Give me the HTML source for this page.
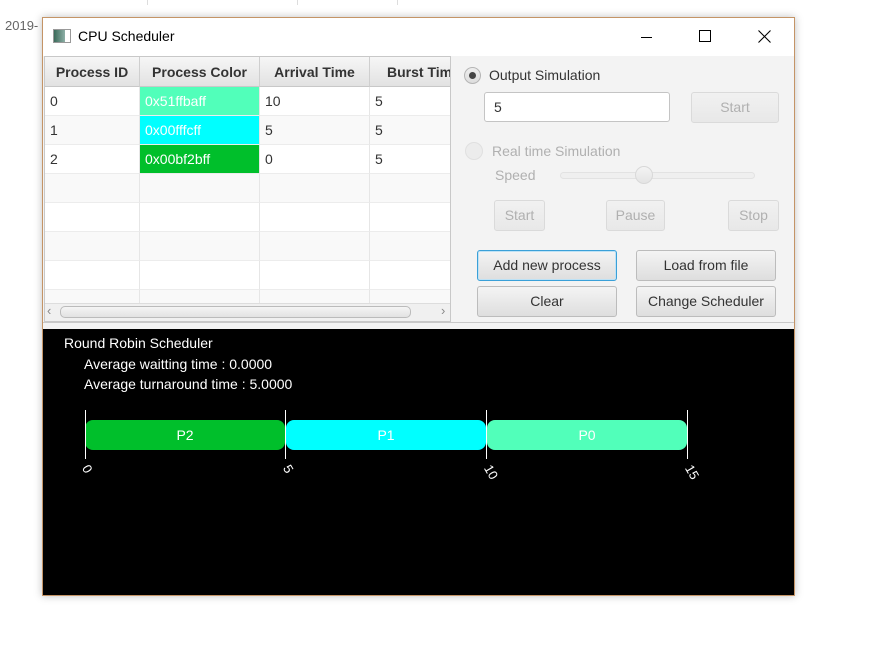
<!DOCTYPE html>
<html><head><meta charset="utf-8"><style>
*{box-sizing:border-box;margin:0;padding:0}
body{width:881px;height:656px;background:#fff;position:relative;overflow:hidden;font-family:"Liberation Sans",sans-serif;font-size:14px;color:#333}
.a{position:absolute}
.win{left:42px;top:17px;width:753px;height:579px;border:1px solid #c49466;background:#f3f3f3;box-shadow:0 0 8px rgba(0,0,0,.25)}
.th{position:absolute;top:0;height:30px;background:linear-gradient(#f6f6f6,#e2e2e2);border-right:1px solid #cfcfcf;border-bottom:1px solid #c8c8c8;font-weight:bold;text-align:center;line-height:30px;color:#333;overflow:hidden;white-space:nowrap}
.td{position:absolute;height:29px;line-height:29px;padding-left:5px;border-right:1px solid #e6e6e6;border-bottom:1px solid #ececec;white-space:nowrap;overflow:hidden}
.btn{position:absolute;height:31px;border:1px solid #bcbcbc;border-radius:3px;background:linear-gradient(#f4f4f4,#dedede);text-align:center;line-height:29px;color:#333}
.dis{color:#b0b0b0;border-color:#dadada;background:linear-gradient(#f1f1f1,#e8e8e8)}
.w{color:#fff}
.tk{position:absolute;top:133px;transform:rotate(60deg);transform-origin:left top;font-size:13px}
</style></head><body>
<div class="a" style="left:5px;top:18px;color:#666;font-size:13px">2019-</div>
<div class="a" style="left:147px;top:0;width:1px;height:5px;background:#ddd"></div>
<div class="a" style="left:297px;top:0;width:1px;height:5px;background:#ddd"></div>
<div class="a" style="left:397px;top:0;width:1px;height:5px;background:#ddd"></div>
<div class="a win">
 <div class="a" style="left:0;top:0;width:751px;height:38px;background:#fff"></div>
 <div class="a" style="left:10px;top:11px;width:18px;height:14px;border:1px solid #999;background:linear-gradient(90deg,#3b6b5a,#8fb0a8 70%,#fff 70%)"></div>
 <div class="a" style="left:35px;top:10px;font-size:14px;color:#000">CPU Scheduler</div>
 <div class="a" style="left:598px;top:19px;width:11px;height:1px;background:#000"></div>
 <div class="a" style="left:656px;top:12px;width:12px;height:12px;border:1px solid #000"></div>
 <svg class="a" style="left:715px;top:12px" width="13" height="13"><path d="M0.5 0.5L12.5 12.5M12.5 0.5L0.5 12.5" stroke="#000" stroke-width="1.1"/></svg>
 <!-- table -->
 <div class="a" style="left:1px;top:38px;width:407px;height:266px;background:#fff;border:1px solid #c8c8c8;overflow:hidden">
  <div class="th" style="left:0;width:95px">Process ID</div>
  <div class="th" style="left:95px;width:120px">Process Color</div>
  <div class="th" style="left:215px;width:110px">Arrival Time</div>
  <div class="th" style="left:325px;width:110px;text-align:left;padding-left:17px">Burst Time</div>
  <div class="td" style="left:0;top:30px;width:95px">0</div><div class="td w" style="left:95px;top:30px;width:120px;background:#51ffba">0x51ffbaff</div><div class="td" style="left:215px;top:30px;width:110px">10</div><div class="td" style="left:325px;top:30px;width:90px">5</div>
  <div class="td" style="left:0;top:59px;width:95px;background:#f9f9f9">1</div><div class="td w" style="left:95px;top:59px;width:120px;background:#00ffff">0x00fffcff</div><div class="td" style="left:215px;top:59px;width:110px;background:#f9f9f9">5</div><div class="td" style="left:325px;top:59px;width:90px;background:#f9f9f9">5</div>
  <div class="td" style="left:0;top:88px;width:95px">2</div><div class="td w" style="left:95px;top:88px;width:120px;background:#00bf2b">0x00bf2bff</div><div class="td" style="left:215px;top:88px;width:110px">0</div><div class="td" style="left:325px;top:88px;width:90px">5</div>
  <div class="td" style="left:0;top:117px;width:95px;background:#f9f9f9"></div><div class="td" style="left:95px;top:117px;width:120px;background:#f9f9f9"></div><div class="td" style="left:215px;top:117px;width:110px;background:#f9f9f9"></div><div class="td" style="left:325px;top:117px;width:90px;background:#f9f9f9"></div>
  <div class="td" style="left:0;top:146px;width:95px"></div><div class="td" style="left:95px;top:146px;width:120px"></div><div class="td" style="left:215px;top:146px;width:110px"></div><div class="td" style="left:325px;top:146px;width:90px"></div>
  <div class="td" style="left:0;top:175px;width:95px;background:#f9f9f9"></div><div class="td" style="left:95px;top:175px;width:120px;background:#f9f9f9"></div><div class="td" style="left:215px;top:175px;width:110px;background:#f9f9f9"></div><div class="td" style="left:325px;top:175px;width:90px;background:#f9f9f9"></div>
  <div class="td" style="left:0;top:204px;width:95px"></div><div class="td" style="left:95px;top:204px;width:120px"></div><div class="td" style="left:215px;top:204px;width:110px"></div><div class="td" style="left:325px;top:204px;width:90px"></div>
  <div class="td" style="left:0;top:233px;width:95px;background:#f9f9f9"></div><div class="td" style="left:95px;top:233px;width:120px;background:#f9f9f9"></div><div class="td" style="left:215px;top:233px;width:110px;background:#f9f9f9"></div><div class="td" style="left:325px;top:233px;width:90px;background:#f9f9f9"></div>
  <div class="a" style="left:0;top:246px;width:407px;height:18px;background:#f0f0f0;border-top:1px solid #ddd"></div>
  <div class="a" style="left:15px;top:249px;width:351px;height:12px;border:1px solid #bbb;border-radius:5px;background:linear-gradient(#f5f5f5,#e2e2e2)"></div>
  <div class="a" style="left:2px;top:246px;color:#888;font-size:13px">‹</div>
  <div class="a" style="left:396px;top:246px;color:#888;font-size:13px">›</div>
 </div>
 <!-- right -->
 <div class="a" style="left:421px;top:49px;width:17px;height:17px;border-radius:50%;border:1px solid #b5b5b5;background:linear-gradient(#eee,#ddd)"><div class="a" style="left:4px;top:4px;width:7px;height:7px;border-radius:50%;background:#444"></div></div>
 <div class="a" style="left:446px;top:49px;color:#333">Output Simulation</div>
 <div class="a" style="left:441px;top:74px;width:186px;height:30px;border:1px solid #c4c4c4;border-radius:3px;background:#fff;padding:6px 0 0 9px">5</div>
 <div class="btn dis" style="left:648px;top:74px;width:88px">Start</div>
 <div class="a" style="left:422px;top:124px;width:18px;height:18px;border-radius:50%;border:1px solid #e0e0e0;background:#ececec"></div>
 <div class="a" style="left:449px;top:125px;color:#b0b0b0">Real time Simulation</div>
 <div class="a" style="left:452px;top:149px;color:#b0b0b0">Speed</div>
 <div class="a" style="left:517px;top:154px;width:195px;height:7px;border:1px solid #e2e2e2;border-radius:4px;background:#efefef"></div>
 <div class="a" style="left:592px;top:148px;width:18px;height:18px;border-radius:50%;border:1px solid #d8d8d8;background:linear-gradient(#f4f4f4,#e4e4e4)"></div>
 <div class="btn dis" style="left:451px;top:182px;width:51px">Start</div>
 <div class="btn dis" style="left:563px;top:182px;width:59px">Pause</div>
 <div class="btn dis" style="left:685px;top:182px;width:51px">Stop</div>
 <div class="btn" style="left:434px;top:232px;width:140px;border-color:#3aa0d8;box-shadow:inset 0 0 0 1px #bfe2f5">Add new process</div>
 <div class="btn" style="left:593px;top:232px;width:140px">Load from file</div>
 <div class="btn" style="left:434px;top:268px;width:140px">Clear</div>
 <div class="btn" style="left:593px;top:268px;width:140px">Change Scheduler</div>
 <div class="a" style="left:0;top:304px;width:751px;height:1px;background:#c8c8c8"></div>
 <!-- chart -->
 <div class="a" style="left:0;top:311px;width:751px;height:266px;background:#000;color:#fff">
  <div class="a" style="left:21px;top:6px">Round Robin Scheduler</div>
  <div class="a" style="left:41px;top:27px">Average waitting time : 0.0000</div>
  <div class="a" style="left:41px;top:47px">Average turnaround time : 5.0000</div>
  <div class="a" style="left:42px;top:91px;width:200px;height:30px;background:#00bf2b;border-radius:8px;text-align:center;line-height:30px">P2</div>
  <div class="a" style="left:243px;top:91px;width:200px;height:30px;background:#00ffff;border-radius:8px;text-align:center;line-height:30px">P1</div>
  <div class="a" style="left:444px;top:91px;width:200px;height:30px;background:#51ffba;border-radius:8px;text-align:center;line-height:30px">P0</div>
  <div class="a" style="left:42px;top:81px;width:1px;height:49px;background:#fff"></div>
  <div class="a" style="left:242px;top:81px;width:1px;height:49px;background:#fff"></div>
  <div class="a" style="left:443px;top:81px;width:1px;height:49px;background:#fff"></div>
  <div class="a" style="left:644px;top:81px;width:1px;height:49px;background:#fff"></div>
  <div class="tk" style="left:49px">0</div>
  <div class="tk" style="left:250px">5</div>
  <div class="tk" style="left:451px">10</div>
  <div class="tk" style="left:652px">15</div>
 </div>
</div>
</body></html>
